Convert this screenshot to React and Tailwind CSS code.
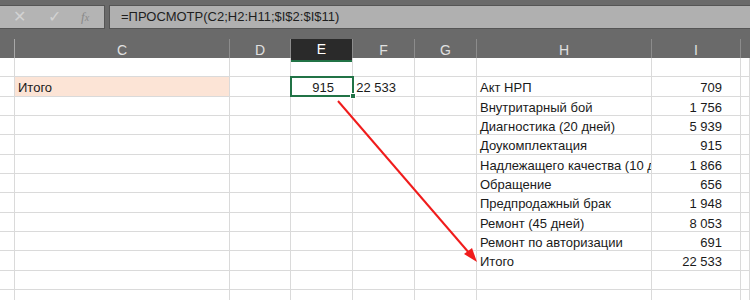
import React from 'react';

const cols = ['C', 'D', 'E', 'F', 'G', 'H', 'I'];

const items = [
  ['Акт НРП', '709'],
  ['Внутритарный бой', '1 756'],
  ['Диагностика (20 дней)', '5 939'],
  ['Доукомплектация', '915'],
  ['Надлежащего качества (10 дней)', '1 866'],
  ['Обращение', '656'],
  ['Предпродажный брак', '1 948'],
  ['Ремонт (45 дней)', '8 053'],
  ['Ремонт по авторизации', '691'],
  ['Итого', '22 533'],
];

const cell = 'border-r border-b border-[#dadada] h-[19.33px] overflow-hidden whitespace-nowrap';

const Row = ({ idx }) => {
  const item = idx >= 1 && idx <= 10 ? items[idx - 1] : null;
  const isTotal = idx === 1;
  return (
    <>
      <div className={cell}></div>
      <div className={`${cell} px-[3px] leading-[21px]`}>
        {isTotal && <div className="bg-[#fce4d6] h-full -mx-[3px] px-[3px]">Итого</div>}
      </div>
      <div className={cell}></div>
      <div className={`${cell} text-right pr-[18px] leading-[21px]`}>{isTotal && '915'}</div>
      <div className={`${cell} text-right pr-[18px] leading-[21px]`}>{isTotal && '22 533'}</div>
      <div className={cell}></div>
      <div className={`${cell} px-[3px] leading-[21px]`}>{item && item[0]}</div>
      <div className={`${cell} text-right pr-[18px] leading-[21px]`}>{item && item[1]}</div>
      <div className={cell}></div>
    </>
  );
};

export default function App() {
  return (
    <div className="w-[750px] h-[300px] overflow-hidden bg-white relative" style={{ fontFamily: '"Liberation Sans", Arial, sans-serif' }}>
      {/* formula bar */}
      <div className="bg-[#6a6a6a] pt-[5px] h-[29px] flex gap-[4px]">
        <div className="w-[105px] h-[24px] bg-[#b4b4b4] border border-[#555555] border-l-0 flex items-center text-[#d2d2d2]">
          <span className="ml-[13px] text-[16px]">✕</span>
          <span className="ml-[22px] text-[16px]">✓</span>
          <span className="ml-[20px] text-[13px] italic text-[#8a8a8a]" style={{ fontFamily: '"Liberation Serif", serif' }}>f<span className="text-[10px]">x</span></span>
        </div>
        <div className="flex-1 h-[24px] bg-[#b0b0b0] border border-[#555555] border-r-0 flex items-center pl-[11px] text-[13px] text-[#1e1e1e]">
          =ПРОСМОТР(C2;H2:H11;$I$2:$I$11)
        </div>
      </div>
      {/* column headers */}
      <div className="bg-[#6a6a6a] h-[29px] pt-[10px] grid grid-cols-[15px_215px_61px_62px_62px_62px_175px_89px_1fr]">
        <div className="border-r border-[#a8a8a8]"></div>
        {cols.map((c) => (
          <div
            key={c}
            className={`border-r border-[#8c8c8c] flex items-center justify-center text-[14px] ${c === 'E' ? 'bg-[#2a2a2a] text-white border-b-2 border-b-[#217346]' : 'text-[#e0e0e0]'}`}
          >
            {c}
          </div>
        ))}
        <div></div>
      </div>
      {/* sheet */}
      <div className="grid grid-cols-[15px_215px_61px_62px_62px_62px_175px_89px_1fr] text-[13px] text-[#1a1a1a]">
        {Array.from({ length: 13 }).map((_, i) => (
          <Row key={i} idx={i} />
        ))}
      </div>
      {/* selected cell E2 */}
      <div className="absolute left-[290px] top-[76px] w-[64px] h-[21px] border-2 border-[#217346] pointer-events-none">
        <div className="absolute -right-[4px] -bottom-[4px] w-[6px] h-[6px] bg-[#217346] border border-white"></div>
      </div>
      {/* arrow */}
      <svg className="absolute left-0 top-0" width="750" height="300">
        <line x1="338" y1="101" x2="470" y2="254" stroke="#f01c1c" strokeWidth="2" />
        <polygon points="477,262 464,254 472,248" fill="#f01c1c" />
      </svg>
    </div>
  );
}
